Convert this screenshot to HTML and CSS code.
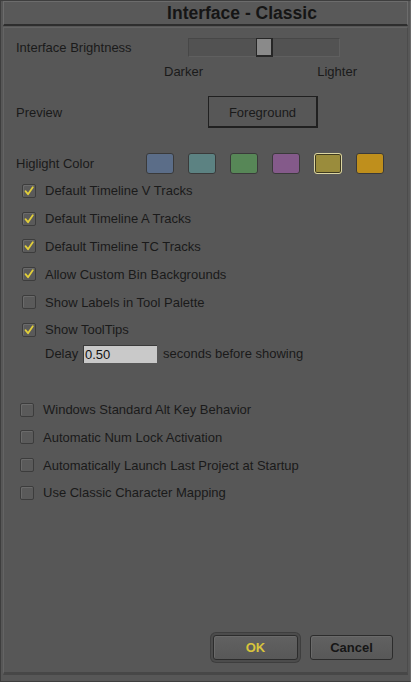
FILE: index.html
```html
<!DOCTYPE html>
<html>
<head>
<meta charset="utf-8">
<link rel="stylesheet" href="styles.css">
</head>
<body>
<div class="window">
  <div class="titlebar"><span class="title">Interface - Classic</span></div>
  <div class="panel">
    <div class="row brightness">
      <span class="label wide">Interface Brightness</span>
      <div class="slider"><div class="thumb"></div></div>
    </div>
    <div class="row scale">
      <span>Darker</span><span>Lighter</span>
    </div>
    <div class="row preview">
      <span class="label pwide">Preview</span>
      <div class="fgbox">Foreground</div>
    </div>
    <div class="row highlight">
      <span class="label hwide">Higlight Color</span>
      <div class="swatches">
        <span class="swatch blue"></span>
        <span class="swatch teal"></span>
        <span class="swatch green"></span>
        <span class="swatch purple"></span>
        <span class="swatch olive selected"></span>
        <span class="swatch gold"></span>
      </div>
    </div>
    <div class="checks first">
      <div class="check"><span class="box on"><svg viewBox="0 0 14 14"><path d="M3.5 7.2 L6 10.2 L10.8 3.2"/></svg></span>Default Timeline V Tracks</div>
      <div class="check"><span class="box on"><svg viewBox="0 0 14 14"><path d="M3.5 7.2 L6 10.2 L10.8 3.2"/></svg></span>Default Timeline A Tracks</div>
      <div class="check"><span class="box on"><svg viewBox="0 0 14 14"><path d="M3.5 7.2 L6 10.2 L10.8 3.2"/></svg></span>Default Timeline TC Tracks</div>
      <div class="check"><span class="box on"><svg viewBox="0 0 14 14"><path d="M3.5 7.2 L6 10.2 L10.8 3.2"/></svg></span>Allow Custom Bin Backgrounds</div>
      <div class="check"><span class="box"></span>Show Labels in Tool Palette</div>
      <div class="check"><span class="box on"><svg viewBox="0 0 14 14"><path d="M3.5 7.2 L6 10.2 L10.8 3.2"/></svg></span>Show ToolTips</div>
      <div class="delay">
        <span class="delay-label">Delay</span>
        <span class="input">0.50</span>
        <span>seconds before showing</span>
      </div>
    </div>
    <div class="checks second">
      <div class="check"><span class="box"></span>Windows Standard Alt Key Behavior</div>
      <div class="check"><span class="box"></span>Automatic Num Lock Activation</div>
      <div class="check"><span class="box"></span>Automatically Launch Last Project at Startup</div>
      <div class="check"><span class="box"></span>Use Classic Character Mapping</div>
    </div>
    <div class="buttons">
      <button class="btn ok">OK</button>
      <button class="btn">Cancel</button>
    </div>
  </div>
</div>
</body>
</html>
```

FILE: styles.css
```css
html, body {
  margin: 0;
  padding: 0;
  background: #565656;
}
body {
  font-family: "Liberation Sans", Arial, sans-serif;
  font-size: 13px;
  color: #1a1a1a;
}
.window {
  width: 411px;
  height: 682px;
  box-sizing: border-box;
  border: 1px solid #3e3e3e;
  border-right-color: #6a6a6a;
  padding: 0 2px 6px 2px;
  display: flex;
  flex-direction: column;
  background: #575757;
}
.titlebar {
  height: 25px;
  box-sizing: border-box;
  border: 1px solid #6c6c6c;
  border-bottom: 2px solid #2e2e2e;
  display: flex;
  align-items: center;
  justify-content: center;
  padding-left: 73px;
  background: #595959;
}
.title {
  font-size: 17.5px;
  font-weight: bold;
  color: #151515;
}
.panel {
  flex: 1;
  margin-top: 1px;
  border: 1px solid #646464;
  border-right-color: #4c4c4c;
  border-bottom: 3px solid #474747;
  padding: 0 14px 12px 12px;
  display: flex;
  flex-direction: column;
  background: #575757;
}
.row {
  display: flex;
  align-items: center;
}
.brightness {
  margin-top: 8px;
  height: 22px;
}
.label.wide { width: 172px; }
.label.pwide { width: 192px; }
.label.hwide { width: 130px; }
.slider {
  position: relative;
  width: 152px;
  height: 19px;
  box-sizing: border-box;
  background: #525252;
  border: 1px solid #474747;
  border-bottom-color: #5f5f5f;
  border-right-color: #5f5f5f;
}
.thumb {
  position: absolute;
  left: 67px;
  top: -1px;
  width: 17px;
  height: 19px;
  box-sizing: border-box;
  background: #8a8a8a;
  border: 2px solid #262626;
  border-top-width: 1px;
  border-left-width: 1px;
}
.scale {
  margin-top: 4px;
  height: 18px;
  margin-left: 148px;
  width: 193px;
  justify-content: space-between;
}
.preview {
  margin-top: 16px;
  height: 32px;
}
.fgbox {
  width: 110px;
  height: 32px;
  box-sizing: border-box;
  border: 2px solid #202020;
  border-top-width: 1px;
  border-left-width: 1px;
  display: flex;
  align-items: center;
  justify-content: center;
  padding-top: 1px;
}
.highlight {
  margin-top: 25px;
  height: 21px;
}
.swatches {
  display: flex;
  gap: 14px;
}
.swatch {
  display: block;
  width: 28px;
  height: 21px;
  box-sizing: border-box;
  border: 1px solid #3a3a3a;
  border-radius: 3px;
}
.blue { background: #5b6d88; }
.teal { background: #5c8282; }
.green { background: #578757; }
.purple { background: #845a8a; }
.olive { background: #9a8c3c; }
.gold { background: #bf8f1c; }
.swatch.selected {
  border: 1px solid #dcd6a2;
  box-shadow: inset 0 0 0 1px #3e3a20;
}
.checks {
  display: flex;
  flex-direction: column;
}
.checks.first {
  margin-top: 3px;
  padding-left: 6px;
}
.checks.second {
  margin-top: 32px;
  padding-left: 4px;
}
.check {
  height: 27.8px;
  display: flex;
  align-items: center;
}
.checks.second .check {
  height: 27.7px;
}
.box {
  width: 14px;
  height: 14px;
  box-sizing: border-box;
  border: 1px solid #3c3c3c;
  border-radius: 2px;
  background: #5a5a5a;
  box-shadow: inset 1px 1px 0 #6a6a6a;
  margin-right: 9px;
  display: flex;
  flex: none;
}
.box svg {
  width: 14px;
  height: 14px;
  margin: -1px;
}
.box svg path {
  fill: none;
  stroke: #e2cf3a;
  stroke-width: 1.8;
  stroke-linecap: round;
  stroke-linejoin: round;
}
.delay {
  height: 20px;
  display: flex;
  align-items: center;
  padding-left: 23px;
}
.delay-label {
  width: 38px;
}
.input {
  width: 74px;
  height: 18px;
  box-sizing: border-box;
  background: #c9c9c9;
  border-top: 1px solid #3a3a3a;
  border-left: 1px solid #3a3a3a;
  margin: 0 6px 0 0;
  padding: 0 0 0 1px;
  line-height: 17px;
  color: #111;
}
.buttons {
  margin-top: auto;
  display: flex;
  justify-content: flex-end;
  gap: 12px;
}
.btn {
  height: 25px;
  box-sizing: border-box;
  font-family: "Liberation Sans", Arial, sans-serif;
  font-size: 13px;
  font-weight: bold;
  color: #161616;
  background: linear-gradient(#616161, #585858);
  border: 1px solid #2c2c2c;
  border-radius: 3px;
  width: 83px;
  padding: 0;
  box-shadow: inset 1px 1px 0 #6a6a6a;
}
.btn.ok {
  width: 85px;
  color: #d8c43c;
  box-shadow: inset 1px 1px 0 #6a6a6a, 0 0 0 2px #4c4c4c, 0 0 0 3px #3e3e3e;
}
```
